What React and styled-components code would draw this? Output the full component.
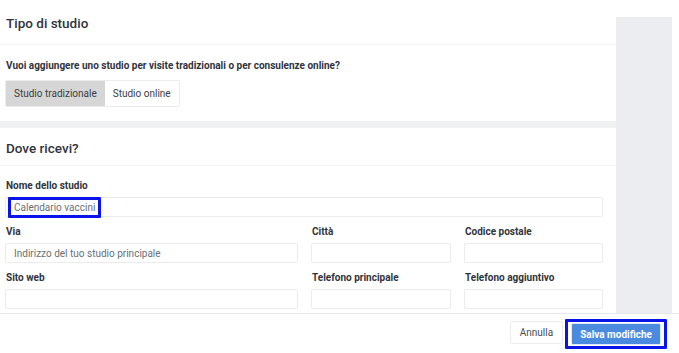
import React from 'react'
import styled, { createGlobalStyle } from 'styled-components'

const GlobalStyle = createGlobalStyle`
* { box-sizing: border-box; }
body {
  margin: 0;
  background: #ffffff;
  font-family: Roboto, "Liberation Sans", Arial, sans-serif;
  color: #333840;
}
`;

const FIELDS = [
  [{ label: 'Via', placeholder: 'Indirizzo del tuo studio principale' }, { label: 'Città' }, { label: 'Codice postale' }],
  [{ label: 'Sito web' }, { label: 'Telefono principale' }, { label: 'Telefono aggiuntivo' }],
];

export default function App() {
  return (
    <Page>
      <GlobalStyle />
      <Top>
        <Main>
          <Card>
            <CardHeader $h={45}>Tipo di studio</CardHeader>
            <CardBody>
              <Question>Vuoi aggiungere uno studio per visite tradizionali o per consulenze online?</Question>
              <Segmented>
                <Segment $active>Studio tradizionale</Segment>
                <Segment>Studio online</Segment>
              </Segmented>
            </CardBody>
          </Card>
          <Card>
            <CardHeader $h={38}>Dove ricevi?</CardHeader>
            <FormBody>
              <Field>
                <Label>Nome dello studio</Label>
                <Input>
                  <Marked>Calendario vaccini</Marked>
                </Input>
              </Field>
              {FIELDS.map((row, i) => (
                <Grid key={i}>
                  {row.map((f) => (
                    <Field key={f.label}>
                      <Label>{f.label}</Label>
                      <Input $pad>{f.placeholder}</Input>
                    </Field>
                  ))}
                </Grid>
              ))}
            </FormBody>
          </Card>
        </Main>
        <Side />
      </Top>
      <Footer>
        <Cancel>Annulla</Cancel>
        <MarkedButton>
          <Save>Salva modifiche</Save>
        </MarkedButton>
      </Footer>
    </Page>
  )
}

const Page = styled.div`
width: 679px;
height: 353px;
display: flex;
flex-direction: column;
overflow: hidden;
`;

const Top = styled.div`
display: flex;
height: 313px;
flex-shrink: 0;
`;

const Main = styled.div`
width: 616px;
display: flex;
flex-direction: column;
gap: 7px;
background: #f0f1f3;
`;

const Side = styled.div`
width: 56px;
margin-top: 17px;
background: #ecedf0;
`;

const Card = styled.section`
background: #fff;
&:last-child{
  flex: 1;
}
`;

const CardHeader = styled.h2`
margin: 0;
height: ${(p) => p.$h}px;
display: flex;
align-items: center;
padding: 2px 6px 0;
font-size: 13.5px;
font-weight: 500;
color: #30343b;
border-bottom: 1px solid #f2f3f4;
`;

const CardBody = styled.div`
display: flex;
flex-direction: column;
align-items: flex-start;
padding: 14px 5px 14px;
`;

const Question = styled.p`
margin: 0 0 7px 1px;
font-size: 10px;
font-weight: 700;
line-height: 14px;
color: #30343b;
`;

const Segmented = styled.div`
display: flex;
border: 1px solid #ececec;
border-radius: 2px;
height: 27px;
`;

const Segment = styled.div`
display: flex;
align-items: center;
padding: 0 8px;
font-size: 10px;
color: #3a3d42;
background: ${(p) => (p.$active ? '#d6d6d6' : '#fff')};
`;

const FormBody = styled.div`
padding: 13px 13px 3px 5px;
display: flex;
flex-direction: column;
gap: 8px;
`;

const Grid = styled.div`
display: grid;
grid-template-columns: 1fr 140px 139px;
column-gap: 13px;
`;

const Field = styled.div`
display: flex;
flex-direction: column;
gap: 4px;
`;

const Label = styled.label`
padding-left: 1px;
font-size: 10px;
font-weight: 700;
line-height: 14px;
color: #30343b;
`;

const Input = styled.div`
height: 20px;
border: 1px solid #ececec;
border-radius: 2px;
display: flex;
align-items: center;
padding-left: ${(p) => (p.$pad ? '8px' : '2px')};
font-size: 10px;
color: #6b6f75;
`;

const Marked = styled.span`
height: 21px;
margin-top: -1px;
margin-bottom: -1px;
display: flex;
align-items: center;
padding: 0 3px 0 3px;
border: 3px solid #0a14e8;
border-radius: 1px;
`;

const Footer = styled.footer`
flex: 1;
border-top: 1px solid #e6e7e9;
display: flex;
align-items: center;
justify-content: flex-end;
gap: 2px;
padding: 0 12px 2px 0;
`;

const Cancel = styled.button`
height: 23px;
padding: 0 9px;
background: #fff;
border: 1px solid #ececec;
border-radius: 2px;
font-family: inherit;
font-size: 10px;
color: #4a4d52;
`;

const MarkedButton = styled.div`
border: 3px solid #0a14e8;
border-radius: 1px;
padding: 1px 3px;
margin-top: 3px;
`;

const Save = styled.button`
height: 22px;
padding: 0 8px;
background: #4a8be0;
border: 1px solid #dfe9f7;
border-radius: 2px;
font-family: inherit;
font-size: 10px;
font-weight: 700;
color: #fff;
`;
